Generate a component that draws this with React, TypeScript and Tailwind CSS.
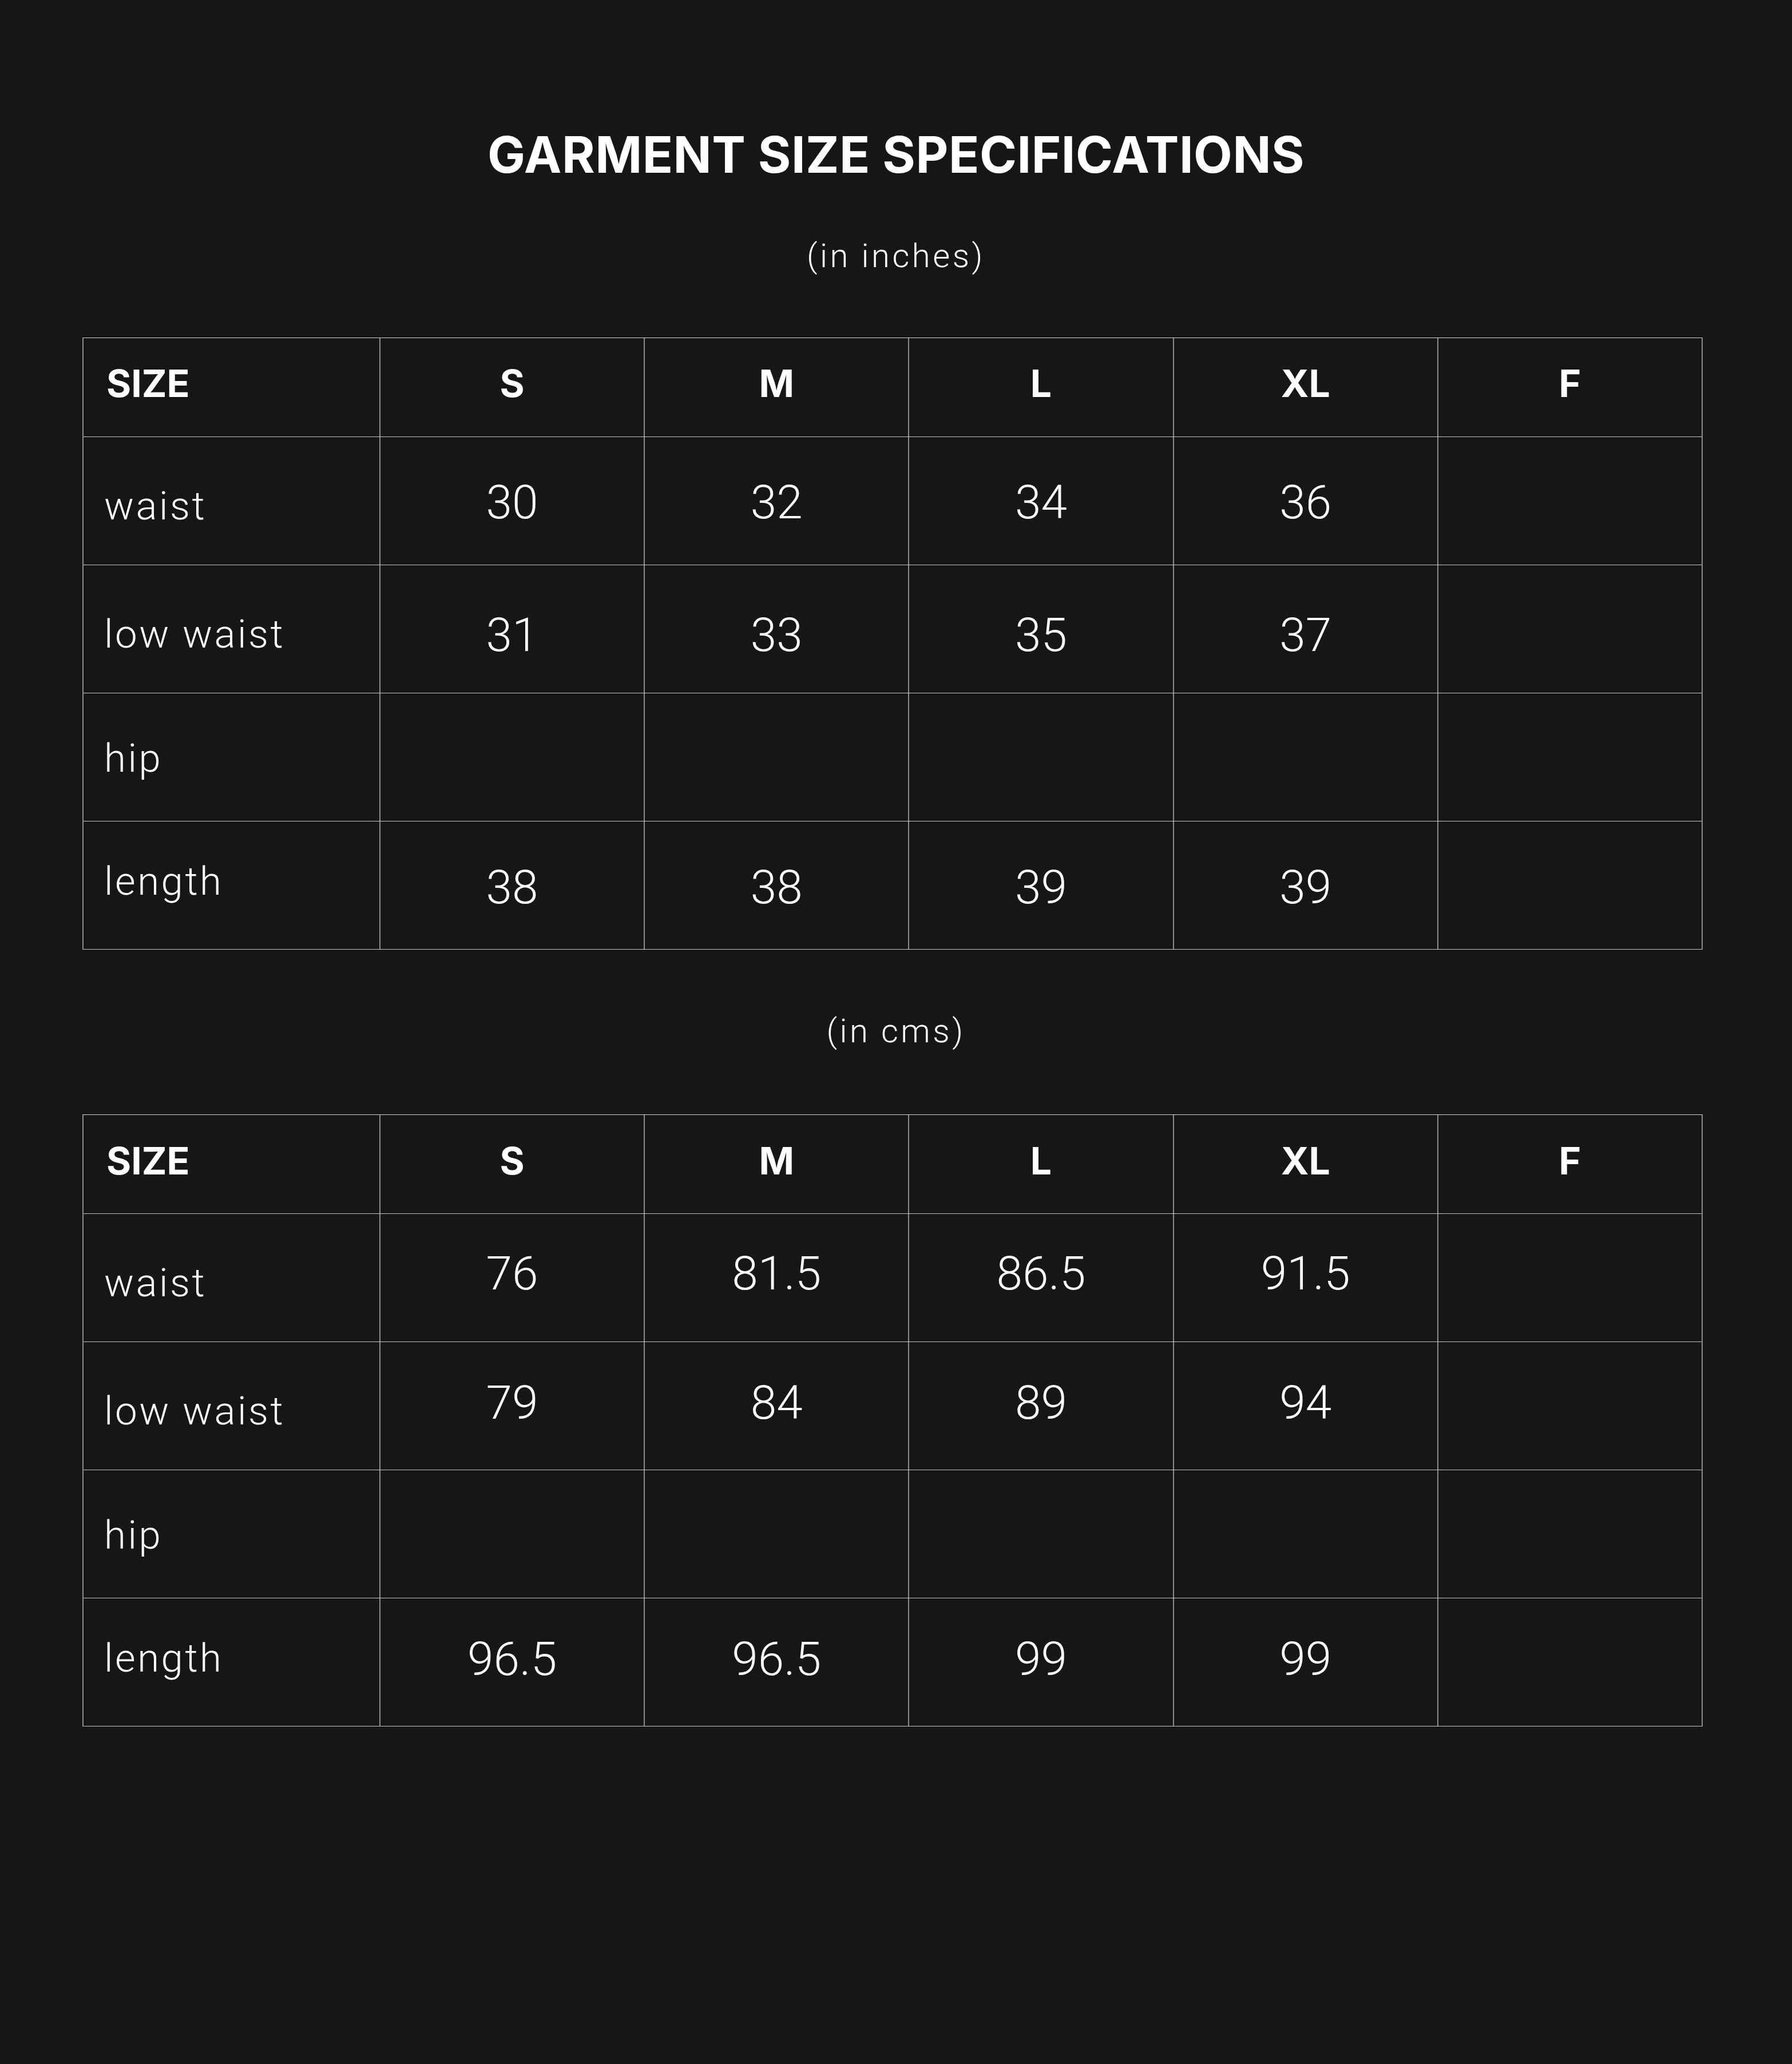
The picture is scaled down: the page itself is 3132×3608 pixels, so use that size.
import React from "react";

type Row = {
  label: string;
  values: string[];
  labelPad: string;
  numPad: string;
};

type Spec = {
  unit: string;
  unitClass: string;
  tableClass: string;
  headerPad: string;
  rows: Row[];
};

const sizes = ["S", "M", "L", "XL", "F"];

const specs: Spec[] = [
  {
    unit: "(in inches)",
    unitClass: "mt-[104px]",
    tableClass: "mt-[114px]",
    headerPad: "pb-[15px]",
    rows: [
      { label: "waist", values: ["30", "32", "34", "36", ""], labelPad: "pt-[18px]", numPad: "pt-[4px]" },
      { label: "low waist", values: ["31", "33", "35", "37", ""], labelPad: "pt-[18px]", numPad: "pt-[20px]" },
      { label: "hip", values: ["", "", "", "", ""], labelPad: "pt-[4px]", numPad: "" },
      { label: "length", values: ["38", "38", "39", "39", ""], labelPad: "pb-[15px]", numPad: "pt-[6px]" },
    ],
  },
  {
    unit: "(in cms)",
    unitClass: "mt-[113px]",
    tableClass: "mt-[117px]",
    headerPad: "pb-[12px]",
    rows: [
      { label: "waist", values: ["76", "81.5", "86.5", "91.5", ""], labelPad: "pt-[18px]", numPad: "pb-[16px]" },
      { label: "low waist", values: ["79", "84", "89", "94", ""], labelPad: "pt-[18px]", numPad: "pb-[12px]" },
      { label: "hip", values: ["", "", "", "", ""], labelPad: "pt-[4px]", numPad: "" },
      { label: "length", values: ["96.5", "96.5", "99", "99", ""], labelPad: "pb-[15px]", numPad: "pb-[12px]" },
    ],
  },
];

const light = "font-['Roboto','Liberation_Sans',sans-serif] font-light";
const bold = "font-['Inter','Liberation_Sans',sans-serif] font-bold";

function SizeTable({ spec }: { spec: Spec }) {
  return (
    <div
      className={`${spec.tableClass} ml-[144px] self-start w-[2832px] border-t border-b border-t-[#d4d4d4] border-b-[#c4c4c4] border-l-2 border-r-2 border-l-[#8a8a8a] border-r-[#8a8a8a]`}
    >
      <div className="grid grid-cols-[517px_repeat(5,1fr)] h-[172px]">
        <div className={`flex items-center pl-[40px] ${spec.headerPad}`}>
          <span className={`${bold} text-[66px] leading-none text-white`}>SIZE</span>
        </div>
        {sizes.map((s) => (
          <div
            key={s}
            className={`flex items-center justify-center border-l-2 border-l-[#8a8a8a] ${spec.headerPad}`}
          >
            <span className={`${bold} text-[66px] leading-none text-white`}>{s}</span>
          </div>
        ))}
      </div>
      {spec.rows.map((r) => (
        <div
          key={r.label}
          className="grid grid-cols-[517px_repeat(5,1fr)] h-[224px] border-t border-t-[#c8c8c8]"
        >
          <div className={`flex items-center pl-[36px] ${r.labelPad}`}>
            <span className={`${light} text-[69px] leading-none tracking-[3.5px] text-white`}>
              {r.label}
            </span>
          </div>
          {r.values.map((v, i) => (
            <div
              key={i}
              className={`flex items-center justify-center border-l-2 border-l-[#8a8a8a] ${r.numPad}`}
            >
              <span className={`${light} text-[82px] leading-none text-white`}>{v}</span>
            </div>
          ))}
        </div>
      ))}
    </div>
  );
}

export default function App() {
  return (
    <div className="min-h-[3608px] w-full bg-[#161616] flex flex-col items-center">
      <h1
        className={`${bold} mt-[226px] text-[88px] leading-none tracking-[0.5px] text-white`}
      >
        GARMENT SIZE SPECIFICATIONS
      </h1>
      {specs.map((spec) => (
        <React.Fragment key={spec.unit}>
          <p
            className={`${light} ${spec.unitClass} text-[58px] leading-none tracking-[4.5px] text-white`}
          >
            {spec.unit}
          </p>
          <SizeTable spec={spec} />
        </React.Fragment>
      ))}
    </div>
  );
}
